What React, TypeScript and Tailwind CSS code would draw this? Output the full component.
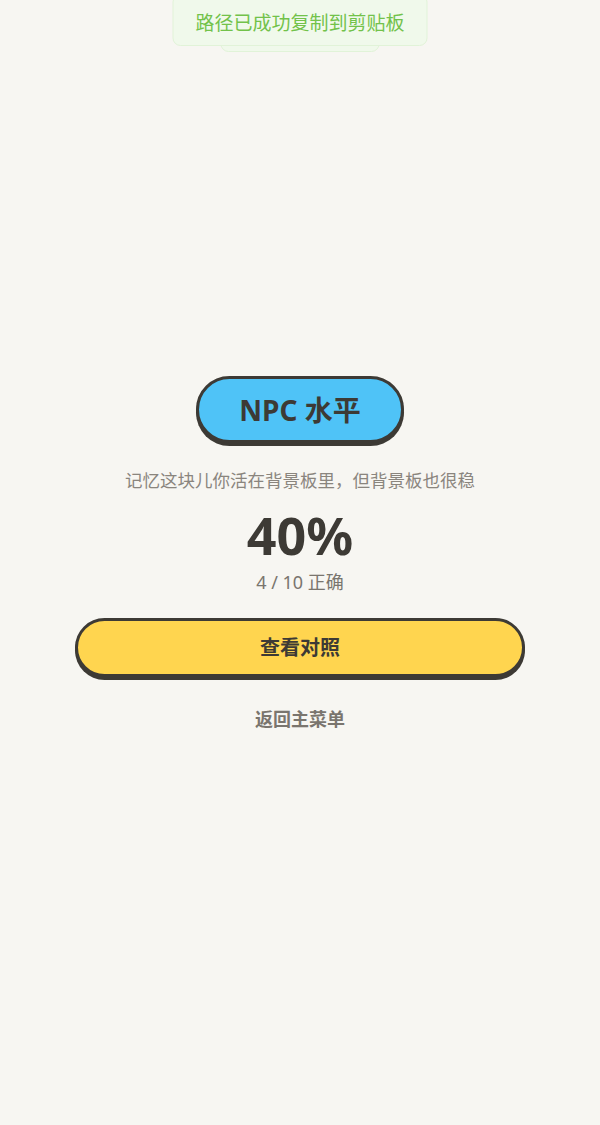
// Quiz result screen with a copy toast
const font = { fontFamily: '"Noto Sans", "Noto Sans CJK SC", sans-serif' }

function Toast() {
  return (
    <div className="absolute left-1/2 top-0 -translate-x-1/2 -translate-y-[6px]">
      <div className="relative">
        <div className="absolute left-[48px] right-[48px] top-[12px] h-[46px] rounded-[8px] border border-[#e1f3d8] bg-[#f0f9eb]" />
        <div className="relative flex h-[52px] w-[255px] items-center justify-center rounded-[8px] border border-[#e1f3d8] bg-[#f0f9eb] pt-[6px] text-[19px] text-[#72c24a]">
          路径已成功复制到剪贴板
        </div>
      </div>
    </div>
  )
}

export default function App() {
  return (
    <div className="relative min-h-[1125px] bg-[#f7f6f2]" style={font}>
      <Toast />
      <div className="flex flex-col items-center pt-[376px]">
        <div className="flex h-[67px] items-center rounded-full border-[3px] border-[#3d3a35] bg-[#4fc3f7] px-[40px] text-[28px] font-bold text-[#3d3a35] shadow-[0_3px_0_#3d3a35]">
          NPC 水平
        </div>
        <p className="mt-[24px] text-[17.5px] text-[#8a857e]">记忆这块儿你活在背景板里，但背景板也很稳</p>
        <div className="mt-[8px] text-[52px] font-bold leading-[68px] text-[#3d3a35]">40%</div>
        <div className="text-[18px] leading-[27px] text-[#7a756e]">4 / 10 正确</div>
        <button className="mt-[22px] h-[59px] w-[450px] rounded-full border-[3px] border-[#3d3a35] bg-[#ffd54f] text-[20px] font-bold text-[#3d3a35] shadow-[0_3px_0_#3d3a35]">
          查看对照
        </button>
        <button className="mt-[29px] text-[18px] font-bold text-[#7a756e]">返回主菜单</button>
      </div>
    </div>
  )
}
